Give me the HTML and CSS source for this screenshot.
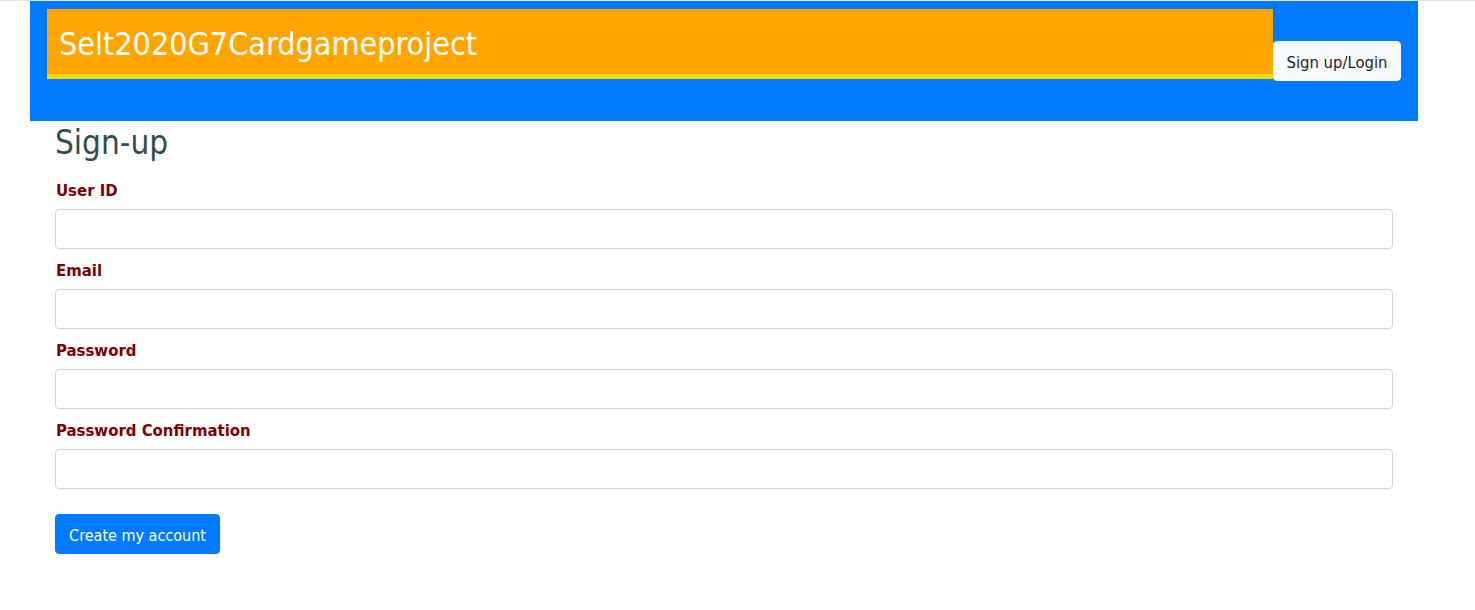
FILE: index.html
```html
<!DOCTYPE html>
<html>
<head>
<meta charset="utf-8">
<link rel="stylesheet" href="styles.css">
</head>
<body>
<header class="topbar">
  <div class="brand">Selt2020G7Cardgameproject</div>
  <button class="login-btn">Sign up/Login</button>
</header>
<main class="content">
  <h1 class="title">Sign-up</h1>
  <form class="form">
    <label class="label">User ID</label>
    <input class="field" type="text">
    <label class="label">Email</label>
    <input class="field" type="text">
    <label class="label">Password</label>
    <input class="field" type="password">
    <label class="label">Password Confirmation</label>
    <input class="field" type="password">
    <button class="submit" type="button">Create my account</button>
  </form>
</main>
</body>
</html>
```
FILE: styles.css
```css
html, body {
  margin: 0;
  padding: 0;
  background: #fff;
}
body {
  border-top: 1px solid #e3e3e3;
  font-family: "DejaVu Sans Condensed", "DejaVu Sans", sans-serif;
  font-stretch: condensed;
}
.topbar {
  margin-left: 30px;
  width: 1388px;
  height: 120px;
  box-sizing: border-box;
  background: #007bff;
  padding: 8px 17px 0 17px;
  display: flex;
  align-items: flex-start;
}
.brand {
  flex: 1;
  height: 65px;
  background: #ffa500;
  border-bottom: 5px solid #ffd700;
  color: #fff;
  font-size: 32px;
  line-height: 70px;
  padding-left: 12px;
}
.login-btn {
  margin-top: 32px;
  width: 128px;
  height: 40px;
  background: #f8f9fa;
  border: 1px solid #f8f9fa;
  border-radius: 4px;
  color: #212529;
  font-family: inherit;
  font-stretch: condensed;
  font-size: 16.5px;
  padding: 2px 0 0 0;
}
.content {
  margin-left: 55px;
  width: 1338px;
}
.title {
  margin: 0;
  padding-top: 2px;
  font-weight: normal;
  font-size: 33px;
  line-height: 40px;
  color: #2f4f4f;
}
.form {
  display: flex;
  flex-direction: column;
  align-items: flex-start;
  padding-top: 18px;
}
.label {
  color: #800000;
  font-weight: bold;
  font-size: 16.6px;
  line-height: 20px;
  padding-left: 1px;
  margin-bottom: 8px;
}
.field {
  width: 100%;
  height: 40px;
  box-sizing: border-box;
  border: 1px solid #ced4da;
  border-radius: 4px;
  margin: 0 0 12px 0;
  padding: 6px 12px;
}
.submit {
  margin-top: 13px;
  height: 40px;
  width: 165px;
  padding: 2px 0 0 0;
  background: #007bff;
  border: 1px solid #007bff;
  border-radius: 4px;
  color: #fff;
  font-family: inherit;
  font-stretch: condensed;
  font-size: 16px;
}
```
